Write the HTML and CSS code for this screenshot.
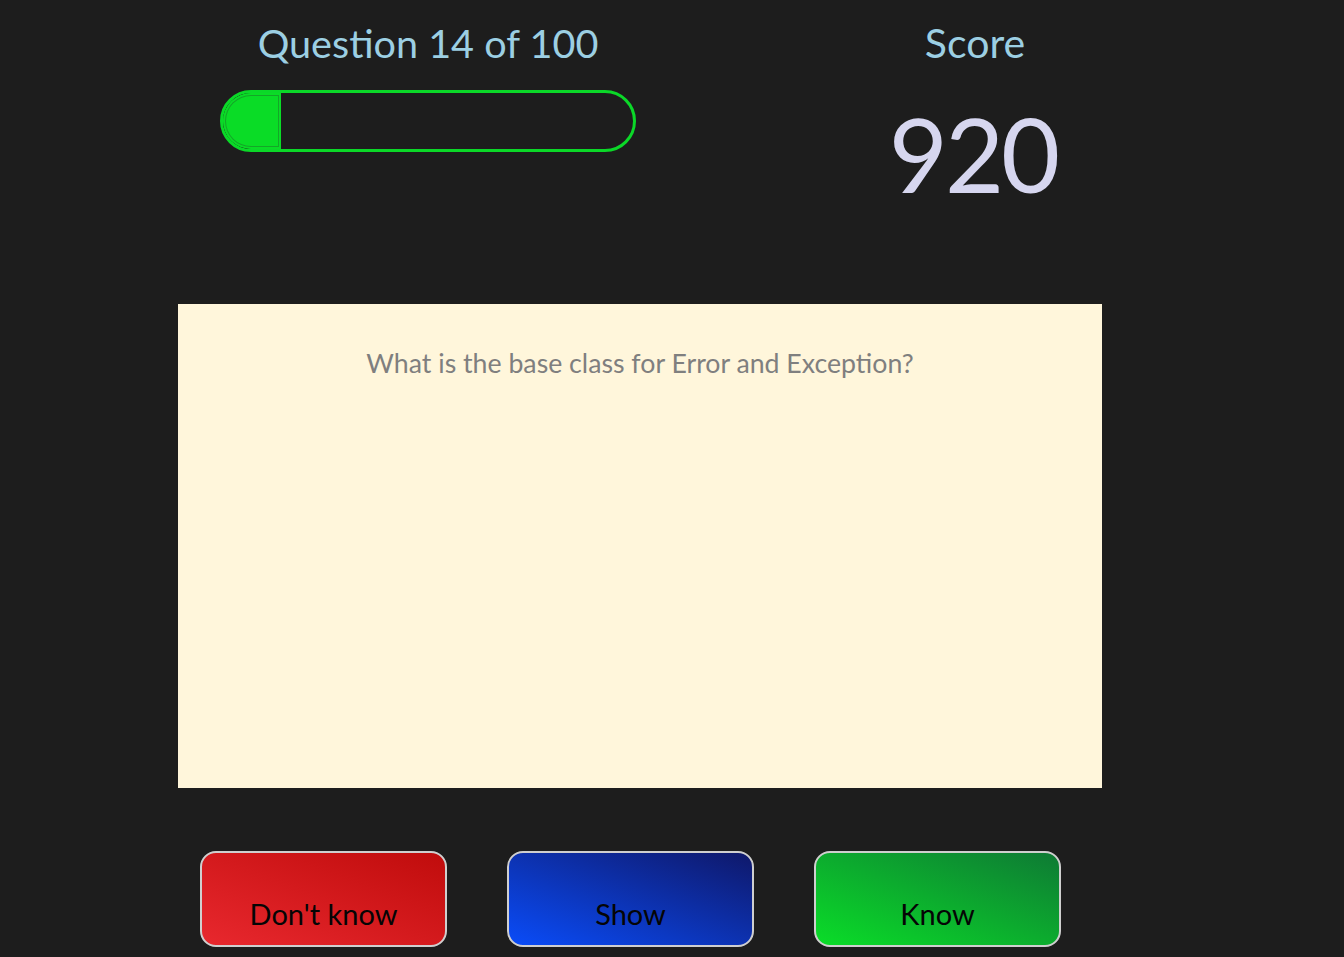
FILE: index.html
```html
<!DOCTYPE html>
<html>
<head>
<meta charset="utf-8">
<link rel="stylesheet" href="styles.css">
</head>
<body>
<div class="page">
  <header class="top">
    <div class="progress-col">
      <div class="question-count">Question 14 of 100</div>
      <div class="bar"><div class="bar-fill"></div></div>
    </div>
    <div class="score-col">
      <div class="score-label">Score</div>
      <div class="score-value">920</div>
    </div>
  </header>
  <main class="card">
    <p class="question">What is the base class for Error and Exception?</p>
  </main>
  <div class="actions">
    <button class="btn btn-red">Don't know</button>
    <button class="btn btn-blue">Show</button>
    <button class="btn btn-green">Know</button>
  </div>
</div>
</body>
</html>
```
FILE: styles.css
```css
html, body {
  margin: 0;
  padding: 0;
  background: #1d1d1d;
  height: 100%;
}
body {
  font-family: "Lato", "Noto Sans", sans-serif;
  overflow: hidden;
}
.page {
  width: 1344px;
}
.top {
  display: flex;
  padding-top: 18px;
  height: 286px;
  box-sizing: border-box;
}
.progress-col {
  margin-left: 178px;
  width: 500px;
  display: flex;
  flex-direction: column;
  align-items: center;
}
.question-count {
  color: #9ccfe3;
  font-size: 39.6px;
  line-height: 50px;
}
.bar {
  margin-top: 22px;
  width: 416px;
  height: 62px;
  box-sizing: border-box;
  border: 3px solid #0bd828;
  border-radius: 31px;
  overflow: hidden;
  display: flex;
}
.bar-fill {
  width: 58px;
  height: 100%;
  background: #0adc26;
  border-radius: 28px 0 0 28px;
  box-shadow: inset 0 0 0 2px #0adc26, inset 0 0 0 3px #14a628;
}
.score-col {
  margin-left: 172px;
  width: 250px;
  display: flex;
  flex-direction: column;
  align-items: center;
}
.score-label {
  color: #9ccfe3;
  font-size: 41px;
  line-height: 50px;
}
.score-value {
  color: #d6d6ef;
  font-size: 102px;
  line-height: 120px;
  letter-spacing: -3px;
  margin-top: 26px;
  margin-right: 4px;
}
.card {
  margin-left: 178px;
  width: 924px;
  height: 484px;
  background: #fff6db;
  margin-top: 18px;
  box-sizing: border-box;
  padding-top: 42px;
}
.question {
  margin: 0;
  text-align: center;
  color: #7f7f7f;
  font-size: 26.7px;
  line-height: 34px;
}
.actions {
  display: flex;
  gap: 60px;
  margin-left: 200px;
  margin-top: 63px;
}
.btn {
  width: 247px;
  height: 96px;
  box-sizing: border-box;
  border: 2px solid #cfcfcf;
  border-radius: 16px;
  font-family: "Lato", "Noto Sans", sans-serif;
  font-size: 29px;
  color: #050505;
  display: flex;
  align-items: flex-end;
  justify-content: center;
  padding: 0 0 14px;
  cursor: pointer;
}
.btn-red {
  background: linear-gradient(to top right, #e8282e, #c00c0c);
}
.btn-blue {
  background: linear-gradient(to top right, #0a4cf8, #0f186a);
}
.btn-green {
  background: linear-gradient(to top right, #0add28, #0e7a34);
}
```
